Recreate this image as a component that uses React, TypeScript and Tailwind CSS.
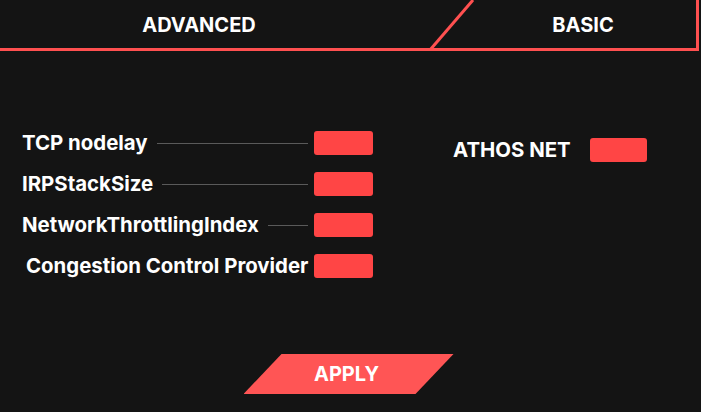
const rows = [
  { label: "TCP nodelay", line: true, indent: false },
  { label: "IRPStackSize", line: true, indent: false },
  { label: "NetworkThrottlingIndex", line: true, indent: false },
  { label: "Congestion Control Provider", line: false, indent: true },
];

const Toggle: React.FC<{ w?: string }> = ({ w = "w-[59px]" }) => (
  <div className={`${w} h-[24px] rounded-[3px] bg-[#ff4545] shrink-0`} />
);

export default function App() {
  return (
    <div
      className="w-[701px] h-[412px] bg-[#141414] text-white overflow-hidden"
      style={{ fontFamily: "Inter, 'Noto Sans', sans-serif" }}
    >
      {/* tabs */}
      <div className="relative w-[699px] h-[51px] flex border-b-[3px] border-r-[3px] border-[#ff5050]">
        <div className="w-[430px] flex items-center justify-center font-bold text-[20px] pr-[32px] pt-[1px]">
          ADVANCED
        </div>
        <div className="flex-1 flex items-center justify-center font-bold text-[20px] pl-[40px] pt-[1px]">
          BASIC
        </div>
        <svg className="absolute left-0 top-0" width="699" height="51">
          <line x1="430" y1="50" x2="473" y2="0" stroke="#ff5050" strokeWidth="3" />
        </svg>
      </div>

      {/* body */}
      <div className="flex pt-[80px]">
        <div className="w-[373px] pl-[22px] flex flex-col gap-[17px]">
          {rows.map((r) => (
            <div key={r.label} className="flex items-center h-[24px]">
              <span className={`font-bold text-[20.4px] whitespace-nowrap ${r.indent ? "pl-[4px]" : ""}`}>
                {r.label}
              </span>
              {r.line ? (
                <div className="flex-1 h-px bg-[#5a5a5a] ml-[9px] mr-[6px]" />
              ) : (
                <div className="flex-1 mr-[6px]" />
              )}
              <Toggle />
            </div>
          ))}
        </div>
        <div className="flex items-center h-[24px] mt-[7px] ml-[80px]">
          <span className="font-bold text-[20.4px] whitespace-nowrap">ATHOS NET</span>
          <div className="ml-[19px]">
            <Toggle w="w-[57px]" />
          </div>
        </div>
      </div>

      {/* apply */}
      <div className="flex justify-center mt-[76px] pr-[4px]">
        <button
          className="w-[210px] h-[40px] bg-[#ff5555] font-bold text-[20px] text-white pr-[4px]"
          style={{ clipPath: "polygon(38px 0, 100% 0, calc(100% - 38px) 100%, 0 100%)" }}
        >
          APPLY
        </button>
      </div>
    </div>
  );
}
